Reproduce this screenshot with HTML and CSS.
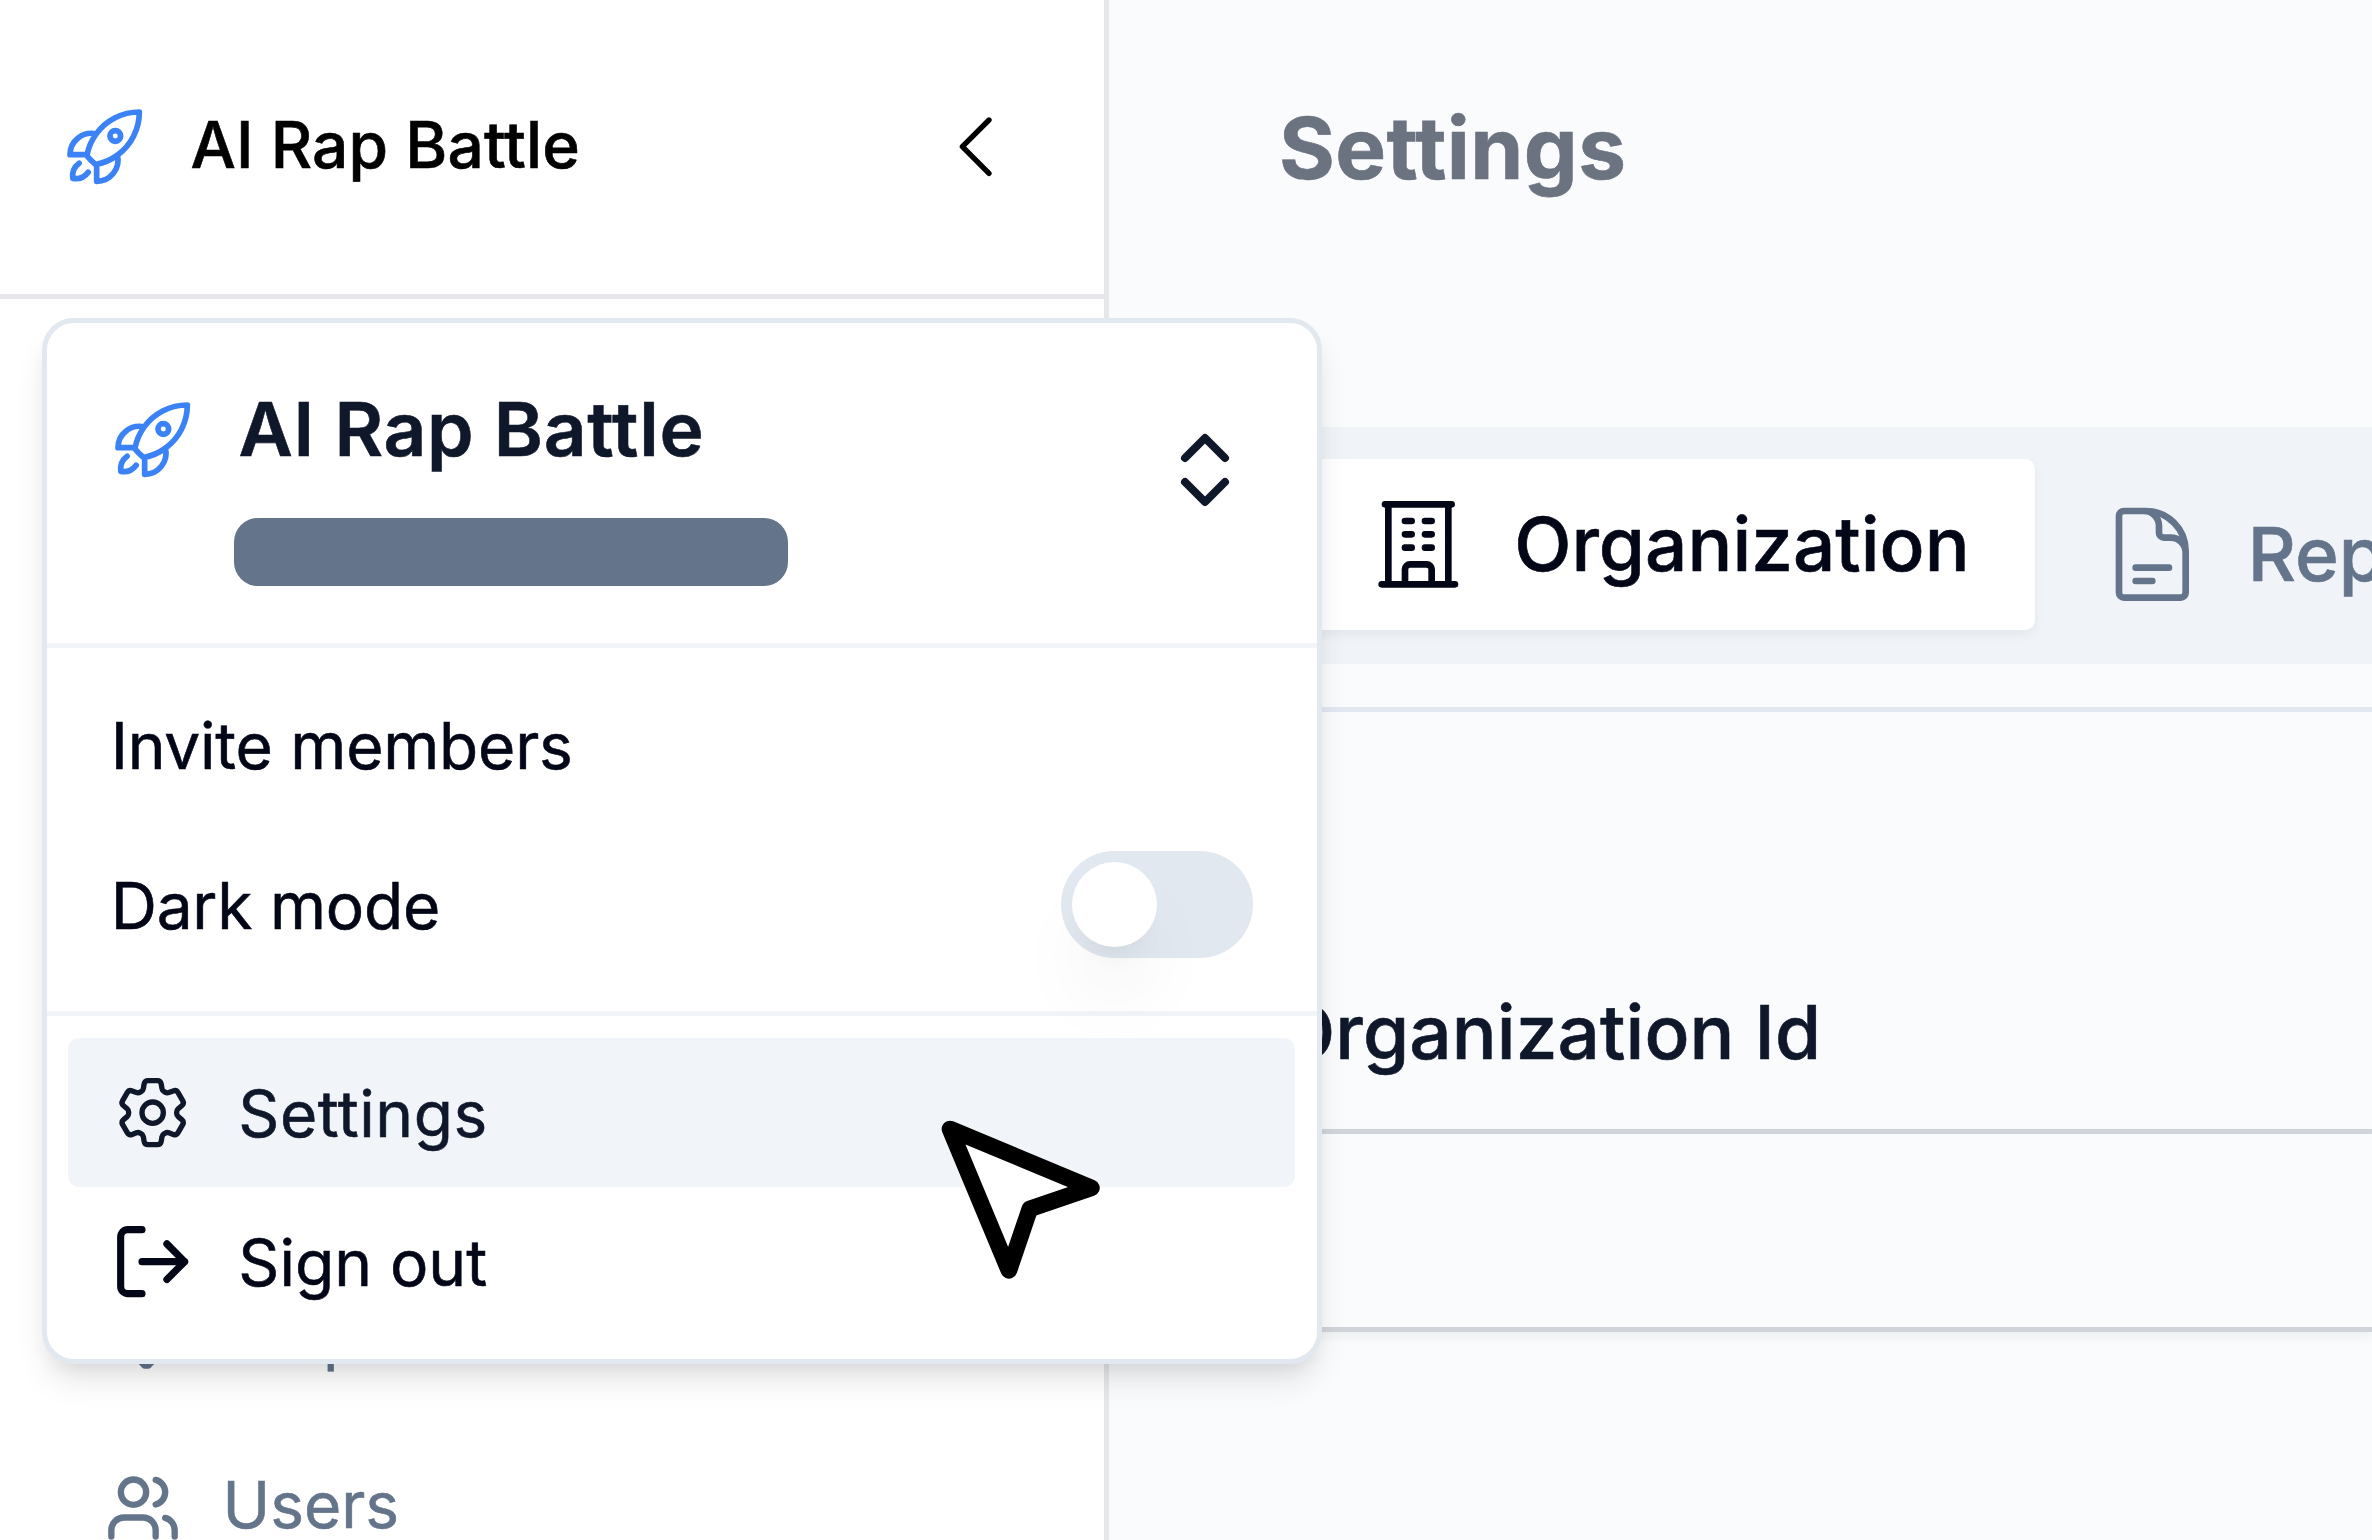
FILE: index.html
```html
<!DOCTYPE html>
<html lang="en">
<head>
<meta charset="utf-8">
<title>AI Rap Battle - Settings</title>
<link rel="stylesheet" href="styles.css">
</head>
<body>
<svg class="defs" width="0" height="0" aria-hidden="true">
  <symbol id="rocket" viewBox="0 0 24 24"><path d="M15.59 14.37a6 6 0 0 1-5.84 7.38v-4.8m5.84-2.58a14.98 14.98 0 0 0 6.16-12.12A14.98 14.98 0 0 0 9.631 8.41m5.96 5.96a14.926 14.926 0 0 1-5.841 2.58m-.119-8.54a6 6 0 0 0-7.381 5.84h4.8m2.581-5.84a14.927 14.927 0 0 0-2.58 5.84m2.699 2.7c-.103.021-.207.041-.311.06a15.09 15.09 0 0 1-2.448-2.448 14.9 14.9 0 0 1 .06-.312m-2.24 2.39a4.493 4.493 0 0 0-1.757 4.306 4.493 4.493 0 0 0 4.306-1.758M16.5 9a1.5 1.5 0 1 1-3 0 1.5 1.5 0 0 1 3 0Z"/></symbol>
</svg>
<div class="app">
  <aside class="sidebar">
    <header class="brand">
      <svg class="icon blue"><use href="#rocket"/></svg>
      <span class="brand-name">AI Rap Battle</span>
      <svg class="icon collapse" viewBox="0 0 24 24"><path d="M15.75 19.5 8.25 12l7.5-7.5"/></svg>
    </header>
    <nav class="nav">
      <a class="nav-item"><svg class="nav-icon" viewBox="0 0 24 24"><path d="M9.3 3 18 12l-8.1 8.7h-1.2L.6 12z"/></svg><span>Help</span></a>
      <a class="nav-item"><svg class="nav-icon" viewBox="0 0 24 24"><path d="M16 21v-2a4 4 0 0 0-4-4H6a4 4 0 0 0-4 4v2"/><circle cx="9" cy="7" r="4"/><path d="M22 21v-2a4 4 0 0 0-3-3.87M16 3.13a4 4 0 0 1 0 7.75"/></svg><span>Users</span></a>
    </nav>
  </aside>
  <main class="main">
    <h1 class="heading">Settings</h1>
    <div class="tabs">
      <div class="tab active">
        <svg class="tab-icon" viewBox="0 0 24 24"><path d="M3.75 21h16.5M4.5 3h15M5.25 3v18m13.5-18v18M9 6.75h1.5m-1.5 3h1.5m-1.5 3h1.5m3-6H15m-1.5 3H15m-1.5 3H15M9 21v-3.375c0-.621.504-1.125 1.125-1.125h3.75c.621 0 1.125.504 1.125 1.125V21"/></svg>
        <span>Organization</span>
      </div>
      <div class="tab">
        <svg class="tab-icon" viewBox="0 0 24 24"><path d="M19.5 14.25v-2.625a3.375 3.375 0 0 0-3.375-3.375h-1.5A1.125 1.125 0 0 1 13.5 7.125v-1.5a3.375 3.375 0 0 0-3.375-3.375H8.25m0 12.75h7.5m-7.5 3H12M10.5 2.25H5.625c-.621 0-1.125.504-1.125 1.125v17.25c0 .621.504 1.125 1.125 1.125h12.75c.621 0 1.125-.504 1.125-1.125V11.25a9 9 0 0 0-9-9Z"/></svg>
        <span>Reports</span>
      </div>
    </div>
    <section class="form">
      <label class="label">Organization Id</label>
      <div class="input"></div>
    </section>
  </main>
</div>

<div class="menu">
  <div class="menu-head">
    <svg class="icon blue"><use href="#rocket"/></svg>
    <div class="account">
      <span class="account-name">AI Rap Battle</span>
      <span class="account-mail"></span>
    </div>
    <svg class="updown" viewBox="0 0 24 24"><path d="m7 15 5 5 5-5M7 9l5-5 5 5"/></svg>
  </div>
  <div class="menu-group">
    <div class="menu-row">Invite members</div>
    <div class="menu-row">Dark mode<span class="switch"><span class="thumb"></span></span></div>
  </div>
  <div class="menu-actions">
    <div class="action hover">
      <svg class="icon" viewBox="0 0 24 24"><path d="M9.594 3.94c.09-.542.56-.94 1.11-.94h2.593c.55 0 1.02.398 1.11.94l.213 1.281c.063.374.313.686.645.87.074.04.147.083.22.127.325.196.72.257 1.075.124l1.217-.456a1.125 1.125 0 0 1 1.37.49l1.296 2.247a1.125 1.125 0 0 1-.26 1.431l-1.003.827c-.293.241-.438.613-.43.992a7.723 7.723 0 0 1 0 .255c-.008.378.137.75.43.991l1.004.827c.424.35.534.955.26 1.43l-1.298 2.247a1.125 1.125 0 0 1-1.369.491l-1.217-.456c-.355-.133-.75-.072-1.076.124a6.47 6.47 0 0 1-.22.128c-.331.183-.581.495-.644.869l-.213 1.281c-.09.543-.56.94-1.11.94h-2.594c-.55 0-1.019-.398-1.11-.94l-.213-1.281c-.062-.374-.312-.686-.644-.87a6.52 6.52 0 0 1-.22-.127c-.325-.196-.72-.257-1.076-.124l-1.217.456a1.125 1.125 0 0 1-1.369-.49l-1.297-2.247a1.125 1.125 0 0 1 .26-1.431l1.004-.827c.292-.24.437-.613.43-.991a6.932 6.932 0 0 1 0-.255c.007-.38-.138-.751-.43-.992l-1.004-.827a1.125 1.125 0 0 1-.26-1.43l1.297-2.247a1.125 1.125 0 0 1 1.37-.491l1.216.456c.356.133.751.072 1.076-.124.072-.044.146-.086.22-.128.332-.183.582-.495.644-.869l.214-1.28Z"/><path d="M15 12a3 3 0 1 1-6 0 3 3 0 0 1 6 0Z"/></svg>
      <span class="action-settings">Settings</span>
    </div>
    <div class="action">
      <svg class="icon bold" viewBox="0 0 24 24"><path d="M9 21H5a2 2 0 0 1-2-2V5a2 2 0 0 1 2-2h4M16 17l5-5-5-5M21 12H9"/></svg>
      <span>Sign out</span>
    </div>
  </div>
</div>
<svg class="cursor" viewBox="0 0 24 24"><path d="m3 3 7.07 16.97 2.51-7.39 7.39-2.51L3 3z"/></svg>
</body>
</html>
```
FILE: styles.css
```css
* { box-sizing: border-box; }
body {
  margin: 0;
  width: 2372px;
  height: 1540px;
  overflow: hidden;
  position: relative;
  font-family: Inter, "Liberation Sans", sans-serif;
  font-size: 64px;
  color: #020617;
  background: #fafbfd;
  -webkit-text-stroke: .6px currentColor;
}
svg {
  flex: none;
  fill: none;
  stroke: currentColor;
  stroke-width: 1.5;
  stroke-linecap: round;
  stroke-linejoin: round;
}
.defs { position: absolute; }
.icon { width: 85.33px; height: 85.33px; }
.blue { color: #3b82f6; stroke-width: 1.6; }
.bold { stroke-width: 2; }

.app { display: flex; height: 1540px; }

.sidebar {
  flex: none;
  width: 1109px;
  background: #fff;
  border-right: 5px solid #e5e7eb;
  overflow: hidden;
}
.brand {
  display: flex;
  align-items: center;
  gap: 42.7px;
  height: 299px;
  padding: 0 86px 0 62px;
  border-bottom: 5px solid #e5e7eb;
  color: #000;
}
.brand-name { font-weight: 500; line-height: 85px; margin: 0 0 6px .5px; letter-spacing: .12px; }
.collapse { margin-left: auto; }
.nav { padding-top: 951px; color: #64748b; }
.nav-item { display: flex; align-items: center; gap: 41.5px; height: 170px; padding-left: 105px; }
.nav-item span { margin-top: -1px; }
.nav-icon { width: 76px; height: 76px; stroke-width: 2; margin-top: 6px; overflow: visible; }
.nav-item:first-child .nav-icon { margin-left: 12px; margin-right: -12px; }

.main { flex: 1; min-width: 0; overflow: hidden; }
.heading {
  margin: 0;
  height: 427px;
  padding: 97.5px 0 0 170px;
  font-size: 85.33px;
  line-height: 100px;
  font-weight: 700;
  letter-spacing: .4px;
  color: #6b7280;
}
.tabs {
  display: flex;
  align-items: flex-start;
  height: 237px;
  padding: 32px 0 0 191px;
  background: #f0f4f8;
  overflow: hidden;
}
.tab {
  display: flex;
  flex: none;
  align-items: center;
  gap: 42.5px;
  height: 171px;
  padding-left: 64px;
  margin-top: 10px;
  border-radius: 10px;
  font-size: 74.67px;
  font-weight: 500;
  color: #64748b;
}
.tab span { margin-top: -1px; }
.tab.active {
  width: 734.5px;
  padding-left: 65px;
  margin-top: 0;
  background: #fff;
  color: #020617;
  box-shadow: 0 5px 11px rgba(0, 0, 0, .05);
}
.tab-icon { width: 106.67px; height: 106.67px; }
.form { margin-top: 43px; border-top: 5px solid #e2e8f0; padding: 267px 0 0 168px; }
.label {
  display: block;
  height: 150px;
  padding-left: 1px;
  line-height: 106px;
  font-size: 74.67px;
  font-weight: 500;
  letter-spacing: .1px;
  color: #0f172a;
}
.input {
  height: 203px;
  border: 5px solid #d1d5db;
  border-right: 0;
  box-shadow: 0 5px 11px rgba(0, 0, 0, .05);
}

.menu {
  position: absolute;
  left: 42px;
  top: 318px;
  width: 1280px;
  height: 1046px;
  background: #fff;
  border: 5px solid #e2e8f0;
  border-radius: 32px;
  box-shadow: 0 21px 32px -5px rgba(0, 0, 0, .1), 0 11px 21px -11px rgba(0, 0, 0, .1);
}
.menu-head {
  display: flex;
  align-items: flex-start;
  height: 325px;
  padding: 53px 64.2px 0 63px;
  border-bottom: 5px solid #f1f5f9;
  color: #0f172a;
}
.menu-head .icon { margin-top: 21px; }
.account { display: flex; flex-direction: column; margin-left: 38.7px; }
.account-name { font-size: 74.67px; line-height: 106px; font-weight: 600; margin-left: 4.5px; letter-spacing: .7px; }
.account-mail { width: 554px; height: 68px; margin-top: 36px; border-radius: 24px; background: #64748b; }
.updown { width: 96px; height: 96px; stroke-width: 2; margin: 45.5px 0 0 auto; }
.menu-group { height: 368px; padding: 17px 64px 0 63.7px; border-bottom: 5px solid #f1f5f9; letter-spacing: -.22px; }
.menu-row { display: flex; align-items: center; justify-content: space-between; height: 160px; }
.switch { width: 192px; height: 106.67px; padding: 10.67px; border-radius: 54px; background: #e2e8f0; margin-top: -1px; }
.thumb {
  display: block;
  width: 85.33px;
  height: 85.33px;
  border-radius: 50%;
  background: #fff;
  box-shadow: 0 53px 80px -16px rgba(0, 0, 0, .1), 0 21px 32px -21px rgba(0, 0, 0, .1);
}
.menu-actions { padding: 22px 22px 0 21px; }
.action { display: flex; align-items: center; gap: 43px; height: 149px; padding-left: 42px; border-radius: 11px; }
.action span { margin-top: 2px; }
.action-settings { letter-spacing: .55px; }
.action.hover { background: #f1f5f9; color: #0f172a; }

.cursor {
  position: absolute;
  left: 924.7px;
  top: 1104.3px;
  width: 200px;
  height: 200px;
  fill: #fff;
  stroke: #000;
  stroke-width: 2;
}
```
